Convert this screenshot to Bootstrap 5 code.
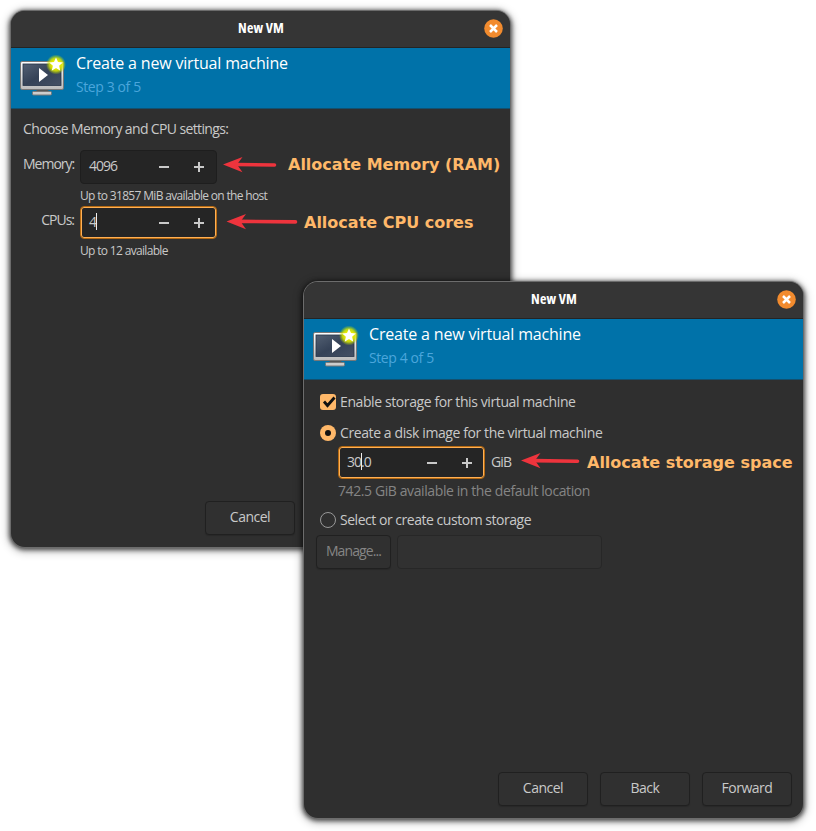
<!DOCTYPE html>
<html lang="en">
<head>
<meta charset="utf-8">
<title>New VM</title>
<meta name="viewport" content="width=device-width, initial-scale=1">
<link href="https://cdn.jsdelivr.net/npm/bootstrap@5.3.0/dist/css/bootstrap.min.css" rel="stylesheet">
<style>
body{background:#fff;font-family:"Open Sans","Noto Sans",sans-serif;font-size:14px;line-height:20px;color:#c9c9c9;letter-spacing:-.4px;overflow:hidden}
.desk{width:816px;height:831px}
.win{width:499px;height:536px;background:#2f2f2f;border-radius:14px;box-shadow:0 0 0 1px #6c6c6c,0 1px 4px 2px rgba(0,0,0,.6),0 2px 9px 3px rgba(0,0,0,.26)}
.win-a{left:11px;top:11px}
.win-b{left:304px;top:282px}
.bar{height:37px;background:#353535;border-radius:14px 14px 0 0;border-bottom:1px solid #242424;color:#fff;font-weight:700;font-stretch:75%;letter-spacing:.1px;padding:0 0 2px 1px}
.x-btn{right:7.5px;top:7.5px;width:19px;height:19px}
.banner{height:61px;background:#0072a9;border-bottom:1px solid #12506f;padding-left:9px}
.pc{width:46px;height:44px;margin-top:6px}
.banner-text{margin-left:10px;padding-top:4px}
.head-t{font-size:16px;line-height:22px;color:#fff;letter-spacing:-.18px}
.step{color:#4ba6dc;line-height:20px;margin-top:3px}
.spin{height:34px;background:#252525;border:1px solid #1e1e1e;border-radius:4px;padding-left:8px;padding-right:7px;letter-spacing:-1px}
.spin > span{position:relative;top:-1px}
.spin.on{border:1px solid #b56a12;border-radius:4px;height:33px;width:137px;padding-left:8px;padding-right:7px;box-shadow:inset 0 0 0 1px #ffb055}
.spin.wide{width:147px}
.sign{width:20px;height:20px}
.sign + .sign{margin-left:15px}
.caret{width:1px;height:17px;background:#eee}
.memgrid{grid-template-columns:51px 137px;column-gap:6px;margin-top:11px}
.hint{font-size:12px;line-height:22px;white-space:nowrap;letter-spacing:-.67px;padding-top:1px;margin-bottom:-1px}
.choose{letter-spacing:-.63px}
.label-r{white-space:nowrap;letter-spacing:-1px}
.dlg-btn{width:90px;height:34px;border:1px solid #202020;border-radius:4px;background:#303030;color:#c9c9c9;padding:0 0 2px;font-size:14px;line-height:20px;letter-spacing:-.5px;box-shadow:0 1px 1px rgba(0,0,0,.15)}
.dlg-btn.manage{width:75px;letter-spacing:-.9px}
.note{font:700 16px/20px "DejaVu Sans",sans-serif;color:#ffb869;letter-spacing:0;white-space:nowrap}
.dim{color:#858585}
.box{width:16px;height:16px;flex:none}
.field{width:205px;height:34px;border:1px solid #272727;border-radius:4px;background:#313131}
</style>
<script src="https://cdn.jsdelivr.net/npm/bootstrap@5.3.0/dist/js/bootstrap.bundle.min.js"></script>
</head>
<body>
<svg width="0" height="0" class="position-absolute">
<defs>
<linearGradient id="frame" x1="0" y1="0" x2="0" y2="1"><stop offset="0" stop-color="#fff"/><stop offset="1" stop-color="#bbb"/></linearGradient>
<linearGradient id="screen" x1="0" y1="0" x2="1" y2="1"><stop offset="0" stop-color="#536073"/><stop offset=".5" stop-color="#354257"/><stop offset="1" stop-color="#445064"/></linearGradient>
<radialGradient id="glow"><stop offset=".35" stop-color="#f2f200"/><stop offset=".65" stop-color="#d8e600" stop-opacity=".85"/><stop offset="1" stop-color="#b6d800" stop-opacity="0"/></radialGradient>
<symbol id="pc" viewBox="0 0 46 44">
<path d="M17 35h11l1 4H16z" fill="#555"/>
<rect x="12.500" y="37.500" width="19" height="3.500" rx="1" fill="#ccc" stroke="#777" stroke-width="1"/>
<rect x=".5" y="7.500" width="43" height="28" rx="1.500" fill="url(#frame)" stroke="#777"/>
<rect x="3" y="10" width="38" height="21.500" fill="url(#screen)" stroke="#27354a" stroke-width=".8"/>
<path d="M19 14v14l9-7z" fill="#fff"/>
<circle cx="36" cy="10.500" r="10" fill="url(#glow)"/>
<path d="M36 3.500l2 4.600 4.800.4-3.700 3.300 1.200 4.900-4.300-2.600-4.300 2.600 1.200-4.900-3.700-3.300 4.800-.4z" fill="#fff"/>
</symbol>
<symbol id="close" viewBox="0 0 19 19"><circle cx="9.500" cy="9.500" r="9.300" fill="#f28b2e"/><path d="M6 6l7 7M13 6l-7 7" stroke="#fff" stroke-width="2.500"/></symbol>
<symbol id="minus" viewBox="0 0 20 20"><path d="M5 10h10" stroke="#c9c9c9" stroke-width="2"/></symbol>
<symbol id="plus" viewBox="0 0 20 20"><path d="M5 10h10M10 5v10" stroke="#c9c9c9" stroke-width="2"/></symbol>
</defs>
</svg>
<main class="desk position-relative">

<section class="win win-a position-absolute d-flex flex-column">
  <header class="bar position-relative d-flex align-items-center justify-content-center"><span>New VM</span><svg class="x-btn position-absolute"><use href="#close"/></svg></header>
  <div class="banner d-flex"><svg class="pc"><use href="#pc"/></svg><div class="banner-text"><div class="head-t">Create a new virtual machine</div><div class="step">Step 3 of 5</div></div></div>
  <div class="flex-grow-1 d-flex flex-column" style="padding:10px 16px 12px 12px">
    <div class="choose">Choose Memory and CPU settings:</div>
    <div class="memgrid d-grid">
      <div class="label-r text-end pt-1">Memory:</div>
      <div class="spin d-flex align-items-center"><span class="me-auto">4096</span><svg class="sign"><use href="#minus"/></svg><svg class="sign"><use href="#plus"/></svg></div>
      <div></div><div class="hint">Up to 31857 MiB available on the host</div>
      <div class="label-r text-end pt-1">CPUs:</div>
      <div class="spin on d-flex align-items-center"><span>4</span><span class="caret me-auto"></span><svg class="sign"><use href="#minus"/></svg><svg class="sign"><use href="#plus"/></svg></div>
      <div></div><div class="hint">Up to 12 available</div>
    </div>
    <div class="mt-auto" style="padding-left:182px"><button class="btn dlg-btn">Cancel</button></div>
  </div>
</section>

<svg class="position-absolute top-0 start-0" width="510" height="260" fill="#ee343d" stroke="#ee343d">
<path id="arrowHead" d="M223 164.500l19.500-7.500-5.500 7.500 5.500 7.700z" stroke="none"/><path d="M236 164.500l38.500.500" stroke-width="3.600" stroke-linecap="round"/>
<use href="#arrowHead" x="3.500" y="57"/><path d="M239 221.400l56.500.500" stroke-width="3.600" stroke-linecap="round"/>
</svg>
<div class="note position-absolute" style="left:288px;top:155px">Allocate Memory (RAM)</div>
<div class="note position-absolute" style="left:304px;top:213px">Allocate CPU cores</div>

<section class="win win-b position-absolute d-flex flex-column">
  <header class="bar position-relative d-flex align-items-center justify-content-center"><span>New VM</span><svg class="x-btn position-absolute"><use href="#close"/></svg></header>
  <div class="banner d-flex"><svg class="pc"><use href="#pc"/></svg><div class="banner-text"><div class="head-t">Create a new virtual machine</div><div class="step">Step 4 of 5</div></div></div>
  <div class="flex-grow-1 d-flex flex-column" style="padding:12px 11px 12px 12px">
    <div class="d-flex align-items-center ps-1 gap-1"><svg class="box"><rect width="16" height="16" rx="3" fill="#ffb869"/><path d="M4 7.500l3.500 4 7-8" fill="none" stroke="#111" stroke-width="2.800"/></svg><span>Enable storage for this virtual machine</span></div>
    <div class="d-flex align-items-center ps-1 gap-1" style="margin-top:11px"><svg class="box"><circle cx="8" cy="8" r="8" fill="#ffb869"/><circle cx="8" cy="8" r="3" fill="#111"/></svg><span>Create a disk image for the virtual machine</span></div>
    <div class="d-flex align-items-center" style="margin:3px 0 0 22px"><div class="spin on wide d-flex align-items-center"><span>30</span><span class="caret" style="margin-right:-1px"></span><span class="me-auto">.0</span><svg class="sign"><use href="#minus"/></svg><svg class="sign"><use href="#plus"/></svg></div><span style="margin:-2px 0 0 6px;letter-spacing:-.9px">GiB</span></div>
    <div class="dim" style="margin:2px 0 0 22px">742.5 GiB available in the default location</div>
    <div class="d-flex align-items-center ps-1 gap-1" style="margin-top:9px"><svg class="box"><circle cx="8" cy="8" r="7.500" fill="none" stroke="#999"/></svg><span style="letter-spacing:-.47px">Select or create custom storage</span></div>
    <div class="d-flex" style="gap:6px;margin-top:5px"><button class="btn dlg-btn manage dim">Manage...</button><div class="field"></div></div>
    <div class="mt-auto d-flex justify-content-end" style="gap:12px"><button class="btn dlg-btn">Cancel</button><button class="btn dlg-btn">Back</button><button class="btn dlg-btn">Forward</button></div>
  </div>
</section>
<svg class="position-absolute" style="left:520px;top:450px" width="62" height="24"><path d="M1 10.500l19.500-7.500-5.500 7.500 5.500 7.700z" fill="#ee343d"/><path d="M14 10.600l43.500.6" stroke="#ee343d" stroke-width="3.600" stroke-linecap="round"/></svg>
<div class="note position-absolute" style="left:587px;top:453px">Allocate storage space</div>
</main>
</body>
</html>
